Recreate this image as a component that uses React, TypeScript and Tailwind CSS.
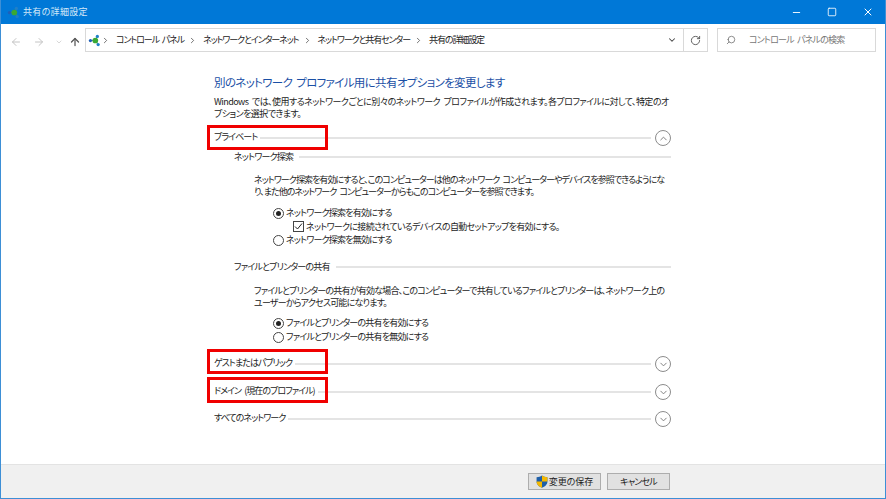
import React from "react";
import { ArrowLeft, ArrowRight, ArrowUp, ChevronDown, ChevronRight, ChevronUp, Minus, RotateCw, Search, Square, X } from "lucide-react";

const NetIcon = (props: { size: number }) => (
  <svg width={props.size} height={props.size} viewBox="0 0 16 16">
    <path d="M3 8 L10 8 L11 3 M10 8 L12 13" stroke="#4a7a8c" strokeWidth="1" fill="none" />
    <circle cx="3" cy="8" r="2" fill="#1f5fb8" />
    <circle cx="11.5" cy="3" r="2" fill="#1f7fc8" />
    <circle cx="12.5" cy="13" r="2" fill="#1f7fc8" />
    <circle cx="9" cy="8" r="3.5" fill="#3aa935" />
  </svg>
);

const Crumb = (props: { label: string }) => (
  <div className="flex items-center">
    <ChevronRight size={9} className="ml-[4px] mr-[6px] text-[#444]" strokeWidth={2} />
    <span className="whitespace-nowrap tracking-[-1.1px]">{props.label}</span>
  </div>
);

const SectionHeader = (props: { label: string; open?: boolean; className: string }) => (
  <div className={`flex items-center h-[18px] w-[458px] ${props.className}`}>
    <span className="text-[9px] tracking-[-0.95px] text-[#222] whitespace-nowrap pb-[3px]">{props.label}</span>
    <div className="flex-1 h-[2px] bg-[#e4e4e4] ml-[3px] mr-[4px]" />
    <div className="w-[16px] h-[16px] mr-[1px] rounded-full border border-[#8c8c8c] flex items-center justify-center text-[#777]">
      {props.open ? <ChevronUp size={11} /> : <ChevronDown size={11} />}
    </div>
  </div>
);

const SubHeader = (props: { label: string; className: string }) => (
  <div className={`flex items-center h-[14px] w-[437px] ${props.className}`}>
    <span className="text-[9px] text-[#222] whitespace-nowrap">{props.label}</span>
    <div className="flex-1 h-[2px] bg-[#e4e4e4] ml-[6px]" />
  </div>
);

const Radio = (props: { label: string; on?: boolean }) => (
  <div className="flex items-center h-[14px] text-[9px] text-[#222] ml-[59px]">
    <div className="w-[11px] h-[11px] rounded-full border border-[#444] flex items-center justify-center mr-[2px] bg-white">
      {props.on && <div className="w-[5px] h-[5px] rounded-full bg-[#222]" />}
    </div>
    <span className="whitespace-nowrap">{props.label}</span>
  </div>
);

const App = () => {
  return (
    <div className="relative w-[886px] h-[499px] flex flex-col bg-white border-x border-b border-[#3d8fd6] overflow-hidden tracking-[-0.8px] [word-spacing:2px] font-['Noto_Sans_CJK_JP','Noto_Sans',sans-serif] [font-feature-settings:'palt']">
      <div className="h-[24px] -mx-px bg-[#0078d7] flex items-center shrink-0 text-white">
        <div className="ml-[7px] mr-[3px]"><NetIcon size={13} /></div>
        <span className="text-[9px] tracking-[0.3px] text-[#d5e8f8]">共有の詳細設定</span>
        <div className="ml-auto flex items-center">
          <div className="w-[36px] flex justify-center"><Minus size={11} /></div>
          <div className="w-[36px] flex justify-center"><Square size={10} /></div>
          <div className="w-[36px] flex justify-center"><X size={12} /></div>
        </div>
      </div>

      <div className="h-[28px] mt-[4px] flex items-stretch shrink-0 -ml-px">
        <div className="w-[85px] flex items-center text-[#c4c4c4]">
          <ArrowLeft size={12} className="ml-[10px]" />
          <ArrowRight size={12} className="ml-[11px]" />
          <ChevronDown size={8} className="ml-[10px]" />
          <ArrowUp size={12} strokeWidth={2.5} className="ml-[6px] text-[#555]" />
        </div>
        <div className="w-[623px] h-[24px] border border-[#d9d9d9] flex items-center text-[9px] text-[#222]">
          <div className="ml-[2px] -mr-[4px]"><NetIcon size={13} /></div>
          <Crumb label="コントロール パネル" />
          <Crumb label="ネットワークとインターネット" />
          <Crumb label="ネットワークと共有センター" />
          <Crumb label="共有の詳細設定" />
          <div className="ml-auto h-full w-[24px] flex items-center justify-center border-r border-[#d9d9d9] text-[#444]">
            <ChevronDown size={10} strokeWidth={2.5} />
          </div>
          <div className="w-[23px] flex items-center justify-center text-[#555]">
            <RotateCw size={11} strokeWidth={2} />
          </div>
        </div>
        <div className="ml-[9px] w-[159px] h-[24px] border border-[#d9d9d9] flex items-center text-[9px] text-[#777]">
          <Search size={10} className="ml-[8px] -scale-x-100" />
          <span className="ml-[13px] whitespace-nowrap">コントロール パネルの検索</span>
        </div>
      </div>

      <div className="flex-1 pl-[213px] pt-[17px]">
        <h1 className="text-[11.5px] tracking-[-0.65px] leading-[18px] text-[#1a4fa5] whitespace-nowrap">別のネットワーク プロファイル用に共有オプションを変更します</h1>
        <p className="text-[9px] tracking-[-0.55px] leading-[12px] text-[#222] mt-[5px] whitespace-nowrap">
          Windows では、使用するネットワークごとに別々のネットワーク プロファイルが作成されます。各プロファイルに対して、特定のオ<br />
          プションを選択できます。
        </p>
        <SectionHeader label="プライベート" open className="mt-[9px]" />
        <SubHeader label="ネットワーク探索" className="mt-[3px] ml-[20px]" />
        <p className="ml-[40px] text-[9px] tracking-[-0.95px] leading-[12px] text-[#222] mt-[10px] whitespace-nowrap">
          ネットワーク探索を有効にすると、このコンピューターは他のネットワーク コンピューターやデバイスを参照できるようにな<br />
          り、また他のネットワーク コンピューターからもこのコンピューターを参照できます。
        </p>
        <div className="mt-[8px]">
          <Radio label="ネットワーク探索を有効にする" on />
          <div className="flex items-center h-[13px] text-[9px] text-[#222] ml-[79px]">
            <div className="w-[11px] h-[11px] border border-[#444] flex items-center justify-center mr-[2px]">
              <svg width="9" height="9" viewBox="0 0 9 9"><path d="M1 4.5 L3.5 7 L8 1.5" stroke="#222" fill="none" /></svg>
            </div>
            <span className="whitespace-nowrap tracking-[-0.7px]">ネットワークに接続されているデバイスの自動セットアップを有効にする。</span>
          </div>
          <Radio label="ネットワーク探索を無効にする" />
        </div>
        <SubHeader label="ファイルとプリンターの共有" className="mt-[13px] ml-[20px]" />
        <p className="ml-[40px] text-[9px] leading-[12px] text-[#222] mt-[11px] whitespace-nowrap">
          ファイルとプリンターの共有が有効な場合、このコンピューターで共有しているファイルとプリンターは、ネットワーク上の<br />
          ユーザーからアクセス可能になります。
        </p>
        <div className="mt-[7px]">
          <Radio label="ファイルとプリンターの共有を有効にする" on />
          <Radio label="ファイルとプリンターの共有を無効にする" />
        </div>
        <SectionHeader label="ゲストまたはパブリック" className="mt-[11px]" />
        <SectionHeader label="ドメイン (現在のプロファイル)" className="mt-[10px]" />
        <SectionHeader label="すべてのネットワーク" className="mt-[9px]" />
      </div>

      <div className="h-[34px] bg-[#f0f0f0] border-t border-[#e3e3e3] flex items-start justify-end pr-[215px] pt-[8px] gap-[6px] shrink-0">
        <button className="w-[73px] h-[17px] bg-[#e1e1e1] border border-[#adadad] flex items-center justify-center text-[9px] tracking-[0px] text-[#222]">
          <svg width="12" height="13" viewBox="0 0 11 12" className="mr-[1px]">
            <path d="M5.5 0.5 C4 1.5 2.5 2 0.5 2 V6 C0.5 9 3 10.8 5.5 11.7 C8 10.8 10.5 9 10.5 6 V2 C8.5 2 7 1.5 5.5 0.5Z" fill="#1f5fa8" />
            <path d="M5.5 0.5 C7 1.5 8.5 2 10.5 2 V6 H5.5Z M5.5 6 V11.7 C3 10.8 0.5 9 0.5 6Z" fill="#f5b800" />
          </svg>
          変更の保存
        </button>
        <button className="w-[63px] h-[17px] bg-[#e1e1e1] border border-[#adadad] flex items-center justify-center text-[9px] text-[#222]">
          キャンセル
        </button>
      </div>

      <div className="absolute left-[206px] top-[125px] w-[121px] h-[25px] border-[3px] border-[#f00000]" />
      <div className="absolute left-[206px] top-[349px] w-[121px] h-[25px] border-[3px] border-[#f00000]" />
      <div className="absolute left-[206px] top-[377px] w-[121px] h-[26px] border-[3px] border-[#f00000]" />
    </div>
  );
};

export default App;
